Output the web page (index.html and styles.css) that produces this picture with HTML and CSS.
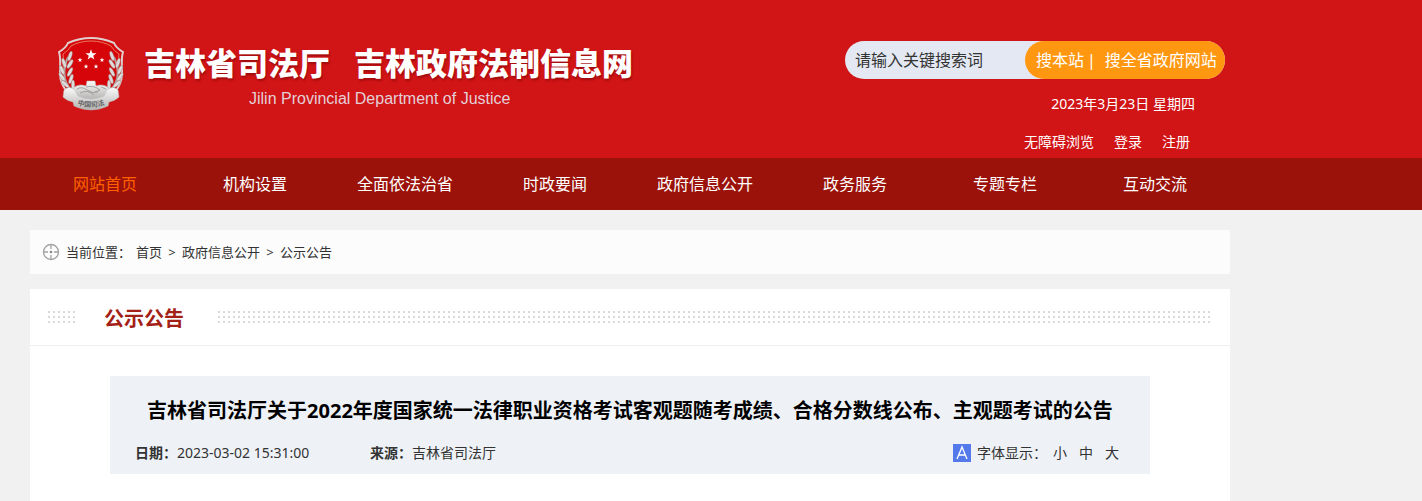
FILE: index.html
```html
<!DOCTYPE html>
<html lang="zh-CN">
<head>
<meta charset="utf-8">
<title>吉林省司法厅 吉林政府法制信息网</title>
<link rel="stylesheet" href="styles.css">
</head>
<body>
<header class="header">
  <div class="wrap header-inner">
    <div class="brand">
      <svg class="emblem" viewBox="0 0 66 74" aria-hidden="true">
        <defs>
          <linearGradient id="silver" x1="0" y1="0" x2="0" y2="1">
            <stop offset="0" stop-color="#fafafa"/>
            <stop offset="1" stop-color="#b5b3b2"/>
          </linearGradient>
          <g id="branch">
            <path d="M14 54C6 46 4 34 10 20" fill="none" stroke="#b9a5a2" stroke-width="2"/>
            <g fill="#dddcdc" stroke="#8d5f5c" stroke-width=".4">
              <ellipse cx="12" cy="19" rx="1.800" ry="5" transform="rotate(18 12 19)"/>
              <ellipse cx="6" cy="26" rx="1.800" ry="5" transform="rotate(-18 6 26)"/>
              <ellipse cx="12" cy="27" rx="1.800" ry="5" transform="rotate(32 12 27)"/>
              <ellipse cx="4" cy="33" rx="1.800" ry="5" transform="rotate(-25 4 33)"/>
              <ellipse cx="12" cy="35" rx="1.800" ry="5" transform="rotate(28 12 35)"/>
              <ellipse cx="4" cy="40" rx="1.800" ry="5" transform="rotate(-34 4 40)"/>
              <ellipse cx="13" cy="42" rx="1.800" ry="5" transform="rotate(18 13 42)"/>
              <ellipse cx="7" cy="47" rx="1.800" ry="5" transform="rotate(-48 7 47)"/>
              <ellipse cx="15" cy="48" rx="1.800" ry="5"/>
            </g>
          </g>
          <path id="star" d="M0-5 1.2-1.6 4.8-1.5 1.9.6 2.9 4 0 2-2.9 4-1.9.6-4.8-1.5-1.2-1.6Z"/>
          <path id="ribbon-line" d="M18 67Q33 73 48 67"/>
        </defs>
        <path d="M33 1C24 1 17 3 10 6Q8 11 1 15C3 21 2 27 2 36C2 51 13 62 33 69C53 62 64 51 64 36C64 27 63 21 65 15Q58 11 56 6C49 3 42 1 33 1Z" fill="#d60509" stroke="#e0cfcd" stroke-width="2"/>
        <path d="M33 4C25 4 18 6 13 9Q10 14 5 17C6 22 5 29 5 36M33 4C41 4 48 6 53 9Q56 14 61 17C60 22 61 29 61 36" fill="none" stroke="#e9785c" stroke-width="1"/>
        <use href="#branch"/>
        <use href="#branch" transform="translate(66 0) scale(-1 1)"/>
        <g fill="#fff">
          <use href="#star" transform="translate(33 18) scale(1.15)"/>
          <use href="#star" transform="translate(22 23) scale(.5)"/>
          <use href="#star" transform="translate(44 23) scale(.5)"/>
          <use href="#star" transform="translate(28 29.500) scale(.5)"/>
          <use href="#star" transform="translate(38 29.500) scale(.5)"/>
        </g>
        <path d="M15 51Q21 46 28 49L29 44H37L38 49Q45 46 51 51L49 59Q33 66 17 59Z" fill="url(#silver)" stroke="#bbb" stroke-width=".5"/>
        <path d="M19 52Q24 49 29 53T40 55M22 56Q30 52 36 58M28 50Q36 48 42 53L37 55M43 50L48 52" fill="none" stroke="#8a8a8a" stroke-width=".7"/>
        <path d="M6 53Q11 48 17 53L20 59Q33 65 46 59L49 53Q55 48 60 53L61 60Q57 64 51 65L50 69Q33 77 16 69L15 65Q9 64 5 60Z" fill="url(#silver)" stroke="#bbb" stroke-width=".5"/>
        <text class="emblem-text" text-anchor="middle"><textPath href="#ribbon-line" startOffset="50%">中国司法</textPath></text>
      </svg>
      <div class="brand-text">
        <h1 class="site-title"><span>吉林省司法厅</span><span>吉林政府法制信息网</span></h1>
        <p class="site-sub">Jilin Provincial Department of Justice</p>
      </div>
    </div>
    <div class="tools">
      <form class="search">
        <input class="search-input" type="text" aria-label="请输入关键搜索词" placeholder="请输入关键搜索词">
        <div class="search-actions">
          <button class="search-btn" type="button">搜本站</button>
          <span>|</span>
          <button class="search-btn search-all" type="button">搜全省政府网站</button>
        </div>
      </form>
      <p class="today">2023年3月23日 星期四</p>
      <div class="user-links">
        <a href="#">无障碍浏览</a>
        <a href="#">登录</a>
        <a href="#">注册</a>
      </div>
    </div>
  </div>
</header>
<nav class="nav">
  <div class="wrap nav-list">
    <a class="active" href="#">网站首页</a>
    <a href="#">机构设置</a>
    <a href="#">全面依法治省</a>
    <a href="#">时政要闻</a>
    <a href="#">政府信息公开</a>
    <a href="#">政务服务</a>
    <a href="#">专题专栏</a>
    <a href="#">互动交流</a>
  </div>
</nav>
<main class="wrap">
  <div class="crumbs">
    <svg class="target" viewBox="0 0 18 18" aria-hidden="true">
      <circle cx="9" cy="9" r="7.500" fill="none" stroke="#a3a3a3" stroke-width="1.300"/>
      <path d="M9 1V6M9 12V17M1 9H6M12 9H17" stroke="#a3a3a3" stroke-width="1.300"/>
      <circle cx="9" cy="9" r="1.300" fill="#888"/>
    </svg>
    <span class="crumb-label">当前位置：</span>
    <a href="#">首页</a><span class="sep">&gt;</span><a href="#">政府信息公开</a><span class="sep">&gt;</span><a href="#">公示公告</a>
  </div>
  <section class="panel">
    <div class="panel-head">
      <span class="dots dots-short"></span>
      <h2 class="panel-title">公示公告</h2>
      <span class="dots dots-long"></span>
    </div>
    <article class="article">
      <div class="article-head">
        <h3 class="article-title">吉林省司法厅关于2022年度国家统一法律职业资格考试客观题随考成绩、合格分数线公布、主观题考试的公告</h3>
        <div class="meta">
          <span class="meta-date"><b>日期：</b>2023-03-02 15:31:00</span>
          <span><b>来源：</b>吉林省司法厅</span>
          <div class="font-size">
            <svg class="font-icon" viewBox="0 0 18 18" aria-hidden="true">
              <path d="M0 0H18V18H0Z" fill="#5479ea"/>
              <path d="M4 15 9 3 14 15M5.700 11H12.300" fill="none" stroke="#fff" stroke-width="1.300"/>
            </svg>
            <span class="font-label">字体显示：</span>
            <button class="size-btn" type="button">小</button>
            <button class="size-btn" type="button">中</button>
            <button class="size-btn" type="button">大</button>
          </div>
        </div>
      </div>
    </article>
  </section>
</main>
</body>
</html>
```

FILE: styles.css
```css
* { box-sizing: border-box; }

body {
  margin: 0;
  background: #f1f1f1;
  color: #333;
  font: 14px/20px "Noto Sans", "Noto Sans CJK SC", sans-serif;
}

h1, h2, h3, p { margin: 0; }
a { color: inherit; text-decoration: none; }

button {
  padding: 0;
  border: 0;
  background: none;
  color: inherit;
  font: inherit;
  cursor: pointer;
}

.wrap {
  max-width: 1200px;
  margin-left: 30px;
}

.header { background: #d11416; color: #fff; }

.header-inner {
  display: flex;
  justify-content: space-between;
  padding-right: 5px;
}

.brand { display: flex; padding: 37px 0 0 28px; }
.emblem { width: 66px; height: 74px; }

.emblem-text {
  fill: #666;
  font-size: 7px;
  font-weight: bold;
}

.brand-text { padding-left: 20px; }

.site-title {
  display: flex;
  gap: 24px;
  font-size: 31px;
  line-height: 52px;
  font-weight: 900;
  white-space: nowrap;
  text-shadow: 1px 2px 2px rgba(90, 0, 0, .4);
}

.site-sub {
  padding-left: 105px;
  color: #e3d0d8;
  font: 16px/20px "Liberation Sans", sans-serif;
}

.tools {
  display: flex;
  flex-direction: column;
  width: 380px;
  padding-top: 41px;
}

.search {
  display: flex;
  height: 38px;
  border-radius: 19px;
  background: #e3e8f2;
  font-size: 16px;
}

.search-input {
  flex: 1;
  min-width: 0;
  padding: 0 0 0 10px;
  border: 0;
  background: none;
  color: #333;
  font: inherit;
}

.search-input::placeholder { color: #333; opacity: 1; }

.search-actions {
  display: flex;
  align-items: center;
  width: 200px;
  padding-left: 11px;
  border-radius: 19px;
  background: #ff9711;
  gap: 3px;
  white-space: nowrap;
}

.search-all { padding-left: 6px; }

.today {
  padding: 15px 30px 0 0;
  text-align: right;
}

.user-links {
  display: flex;
  justify-content: flex-end;
  gap: 20px;
  padding: 18px 35px 6px 0;
}

.nav { background: #9a1209; color: #fff; }

.nav-list {
  display: grid;
  grid-template-columns: repeat(8, 1fr);
  font-size: 16px;
  line-height: 52px;
  text-align: center;
}

.nav .active { color: #ff6000; }

.crumbs {
  display: flex;
  align-items: center;
  height: 44px;
  margin: 20px 0 15px;
  padding-left: 12px;
  background: #fcfcfc;
  font-size: 13px;
}

.target { width: 18px; height: 18px; margin-right: 6px; }
.crumb-label { margin-right: 5px; }
.sep { width: 20px; text-align: center; }

.panel { min-height: 212px; background: #fff; }

.panel-head {
  display: flex;
  align-items: center;
  height: 57px;
  padding: 0 19px 0 18px;
  border-bottom: 1px solid #eee;
}

.dots {
  height: 12px;
  background:
    repeating-linear-gradient(to bottom, transparent 0 2px, #fff 2px 5px),
    repeating-linear-gradient(to right, #d9d9d9 0 2px, #fff 2px 5px);
}

.dots-short { width: 27px; }
.dots-long { flex: 1; }

.panel-title {
  margin: 0 34px 0 29px;
  padding-top: 4px;
  color: #a32016;
  font-size: 20px;
  line-height: 52px;
}

.article { padding: 30px 80px; }
.article-head { padding: 19px 25px 10px; background: #eef2f7; }

.article-title {
  color: #000;
  font-size: 20px;
  line-height: 32px;
  text-align: center;
}

.meta {
  display: flex;
  align-items: center;
  padding-top: 15px;
  line-height: 22px;
}

.meta-date { width: 235px; }

.font-size {
  display: flex;
  align-items: center;
  margin-left: auto;
  padding-right: 6px;
  gap: 12px;
}

.font-icon { width: 18px; height: 18px; margin-right: -6px; }
.font-label { margin-right: -6px; }
```
